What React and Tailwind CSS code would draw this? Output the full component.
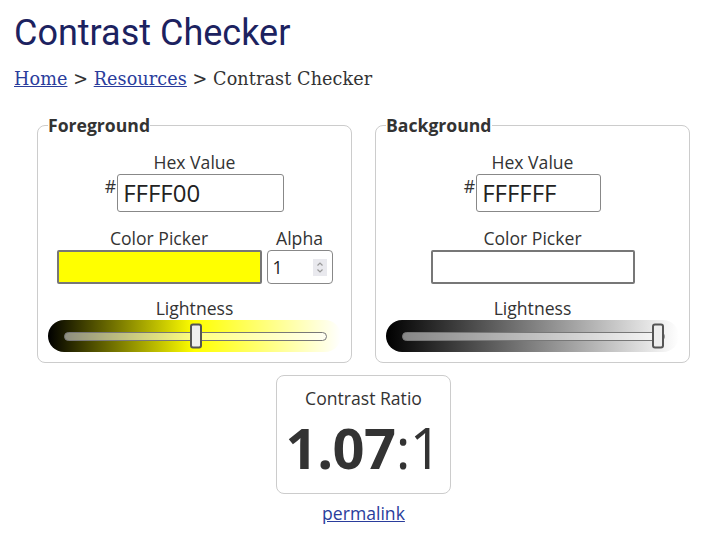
const labelCls = "text-[17.6px] leading-[24px] text-[#333]"

const Lightness = ({ track, value }) => {
  // thumb travels inside the track, not past its ends
  return (
    <div className={`mt-[12px] h-[32px] rounded-full pl-[16px] pr-[14px] flex items-center ${track}`}>
      <div className="relative w-full h-[9px] rounded-full border border-[#777] bg-white/50">
        <div
          className="absolute top-1/2 -translate-y-1/2 w-[12px] h-[25px] rounded-[3px] border-2 border-[#555] bg-[#eee]"
          style={{ left: `calc(${value * 100}% - ${value * 12}px)` }}
        />
      </div>
    </div>
  )
}

const HexField = ({ value, width }) => (
  <div className="flex flex-col items-center mt-[13px]">
    <div className={labelCls}>Hex Value</div>
    <div className="flex items-start">
      <span className="text-[17.6px] leading-[18px] mt-[3px] mr-[1px] text-[#333]">#</span>
      <div className={`${width} h-[38px] border border-[#888] rounded-[3px] pl-[5px] flex items-center text-[24px] text-[#222]`}>
        {value}
      </div>
    </div>
  </div>
)

const Panel = ({ title, children }) => (
  <fieldset className="w-[315px] border border-[#ccc] rounded-lg px-[10px] pb-[10px]">
    <legend className="text-[17.6px] leading-[24px] font-bold text-[#333]">{title}</legend>
    {children}
  </fieldset>
)

const App = () => {
  return (
    <div className="min-h-[543px] bg-white pl-[14px] font-['Open_Sans',sans-serif]">
      <h1 className="pt-[12px] text-[36px] leading-[1.2] font-['Roboto',sans-serif] text-[#1c2260]">
        Contrast Checker
      </h1>
      <div className="mt-[11px] text-[17.6px] leading-[26px] tracking-[0.1px] font-['DejaVu_Serif',serif] text-[#333]">
        <a href="#" className="text-[#2a3d9c] underline">Home</a>
        {' > '}
        <a href="#" className="text-[#2a3d9c] underline">Resources</a>
        {' > Contrast Checker'}
      </div>

      <div className="ml-[23px] w-[653px] mt-[21px]">
        <div className="flex gap-[23px]">
          <Panel title="Foreground">
            <HexField value="FFFF00" width="w-[167px]" />
            <div className="flex justify-center gap-[5px] mt-[14px]">
              <div className="flex flex-col items-center">
                <div className={labelCls}>Color Picker</div>
                <div className="w-[205px] h-[34px] border-2 border-[#777] rounded-[2px] bg-[#ffff00]" />
              </div>
              <div className="flex flex-col items-center">
                <div className={labelCls}>Alpha</div>
                <div className="w-[66px] h-[34px] border border-[#888] rounded-[4px] pl-[5px] pr-[5px] flex items-center justify-between text-[17.6px] text-[#222]">
                  <span>1</span>
                  <div className="w-[14px] h-[17px] bg-[#e9e9ee] flex items-center justify-center">
                    <svg width="8" height="13" viewBox="0 0 8 13" fill="none" stroke="#999" strokeWidth="1.2">
                      <polyline points="1.5,4.5 4,2 6.5,4.5" />
                      <polyline points="1.5,8.5 4,11 6.5,8.5" />
                    </svg>
                  </div>
                </div>
              </div>
            </div>
            <div className={`${labelCls} text-center mt-[12px]`}>Lightness</div>
            <div className="-mt-[12px]">
              <Lightness track="bg-linear-to-r/srgb from-black via-[#ffff00] to-white" value={0.5} />
            </div>
          </Panel>

          <Panel title="Background">
            <HexField value="FFFFFF" width="w-[125px]" />
            <div className="flex flex-col items-center mt-[14px]">
              <div className={labelCls}>Color Picker</div>
              <div className="w-[204px] h-[34px] border-2 border-[#777] rounded-[2px] bg-white" />
            </div>
            <div className={`${labelCls} text-center mt-[12px]`}>Lightness</div>
            <div className="-mt-[12px]">
              <Lightness track="bg-linear-to-r/srgb from-black to-white" value={1} />
            </div>
          </Panel>
        </div>

        <div className="mx-auto mt-[12px] w-[175px] h-[119px] border border-[#ccc] rounded-lg flex flex-col items-center pt-[10px] text-[#333]">
          <div className="text-[17.6px] leading-[24px]">Contrast Ratio</div>
          <div className="text-[56px] leading-[74px] tracking-[-0.5px]">
            <span className="font-bold">1.07</span>:1
          </div>
        </div>
        <div className="text-center mt-[7px]">
          <a href="#" className="text-[17.6px] leading-[24px] text-[#2a3d9c] underline">permalink</a>
        </div>
      </div>
    </div>
  )
}

export default App
